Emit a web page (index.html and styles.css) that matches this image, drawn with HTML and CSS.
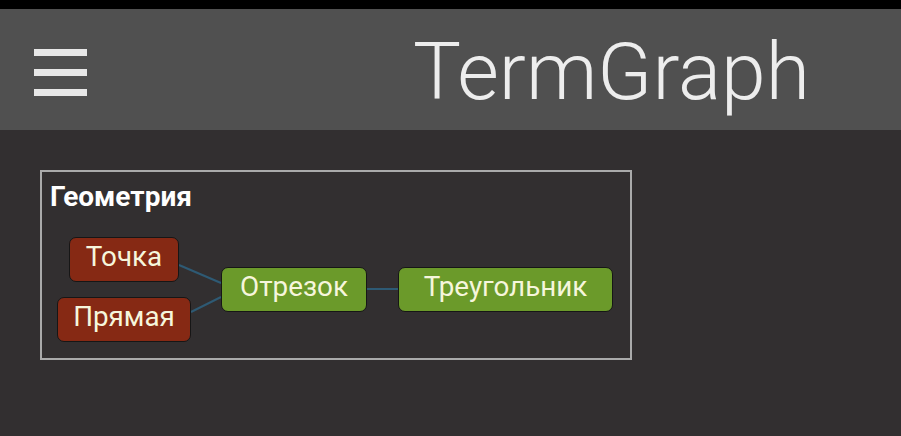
FILE: index.html
```html
<!DOCTYPE html>
<html>
<head>
<meta charset="utf-8">
<link rel="stylesheet" href="styles.css">
</head>
<body>
<div class="topstrip"></div>
<header class="appbar">
  <div class="burger"><span></span><span></span><span></span></div>
  <h1 class="title">TermGraph</h1>
</header>
<main class="content">
  <section class="group">
    <h2 class="group-title">Геометрия</h2>
    <div class="canvas">
      <svg class="edges" width="590" height="190" viewBox="0 0 590 190">
        <line x1="139" y1="95" x2="181" y2="113"/>
        <line x1="151" y1="142" x2="181" y2="127"/>
        <line x1="327" y1="119" x2="358" y2="119"/>
      </svg>
      <div class="node red" style="left:29px;top:67px;width:110px">Точка</div>
      <div class="node red" style="left:17px;top:127px;width:134px">Прямая</div>
      <div class="node green" style="left:181px;top:97px;width:146px">Отрезок</div>
      <div class="node green" style="left:358px;top:97px;width:215px">Треугольник</div>
    </div>
  </section>
</main>
</body>
</html>
```
FILE: styles.css
```css
html, body {
  margin: 0;
  padding: 0;
}
body {
  background: #322f30;
  width: 901px;
  height: 436px;
  overflow: hidden;
  font-family: Roboto, "Noto Sans", sans-serif;
}
.topstrip {
  height: 9px;
  background: #000;
}
.appbar {
  height: 121px;
  background: #505050;
  display: flex;
  align-items: center;
  padding-left: 34px;
  box-sizing: border-box;
}
.burger {
  width: 53px;
  height: 47px;
  margin-top: 6px;
  display: flex;
  flex-direction: column;
  justify-content: space-between;
}
.burger span {
  display: block;
  height: 7px;
  background: #e8e8e8;
}
.title {
  margin: 0 0 0 326px;
  font-weight: 300;
  font-size: 80.5px;
  line-height: 1;
  color: #ededed;
  letter-spacing: 0;
  position: relative;
  top: 3px;
}
.content {
  padding: 40px 0 0 40px;
}
.group {
  position: relative;
  width: 588px;
  height: 186px;
  border: 2px solid #aaaaaa;
  box-sizing: content-box;
}
.group-title {
  margin: 0;
  padding: 11px 0 0 8px;
  font-size: 28px;
  font-weight: 700;
  color: #ffffff;
  line-height: 28px;
}
.canvas {
  position: absolute;
  left: -2px;
  top: -2px;
  width: 590px;
  height: 190px;
}
.edges {
  position: absolute;
  left: 0;
  top: 0;
}
.edges line {
  stroke: #2e5a74;
  stroke-width: 2;
}
.node {
  position: absolute;
  height: 45px;
  box-sizing: border-box;
  border: 1px solid #161616;
  border-radius: 7px;
  color: #f6f6dc;
  font-size: 27.8px;
  line-height: 37px;
  text-align: center;
}
.red {
  background: #862914;
}
.green {
  background: #6b9a2a;
}
```
